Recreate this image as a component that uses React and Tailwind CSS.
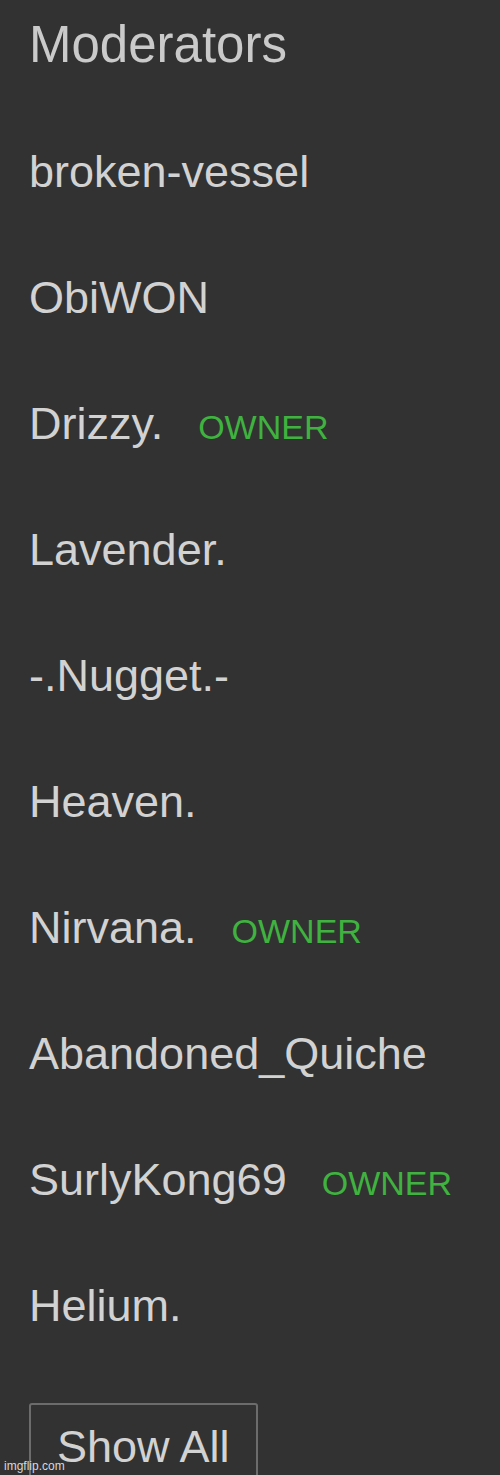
const MODERATORS = [
  { name: "broken-vessel" },
  { name: "ObiWON" },
  { name: "Drizzy.", owner: true },
  { name: "Lavender." },
  { name: "-.Nugget.-" },
  { name: "Heaven." },
  { name: "Nirvana.", owner: true },
  { name: "Abandoned_Quiche" },
  { name: "SurlyKong69", owner: true },
  { name: "Helium." },
];

function ModeratorRow({ name, owner }) {
  return (
    <li className="flex items-baseline h-[126px] leading-[126px]">
      <span className="text-[45px] text-[#d2d2d2]">{name}</span>
      {owner && (
        <span className="ml-[35px] text-[34px] text-[#3fb23f]">OWNER</span>
      )}
    </li>
  );
}

export default function App() {
  return (
    <div
      className="relative h-[1475px] w-full bg-[#323232] overflow-hidden pl-[29px] pt-[19px]"
      style={{ fontFamily: '"Liberation Sans", Arial, sans-serif' }}
    >
      <h2 className="text-[51px] leading-[51px] text-[#cacaca]">Moderators</h2>

      <ul className="mt-[39px]">
        {MODERATORS.map((m) => (
          <ModeratorRow key={m.name} {...m} />
        ))}
      </ul>

      <button className="mt-[34px] block rounded-[3px] border-2 border-[#6c6c6c] bg-transparent px-[26px] pt-[16px] pb-[20px] text-[45px] leading-[1.15] text-[#d2d2d2]">
        Show All
      </button>

      {/* watermark */}
      <span className="absolute left-[4px] bottom-[2px] text-[12px] leading-[14px] text-[#d8d8d8]">
        imgflip.com
      </span>
    </div>
  );
}
